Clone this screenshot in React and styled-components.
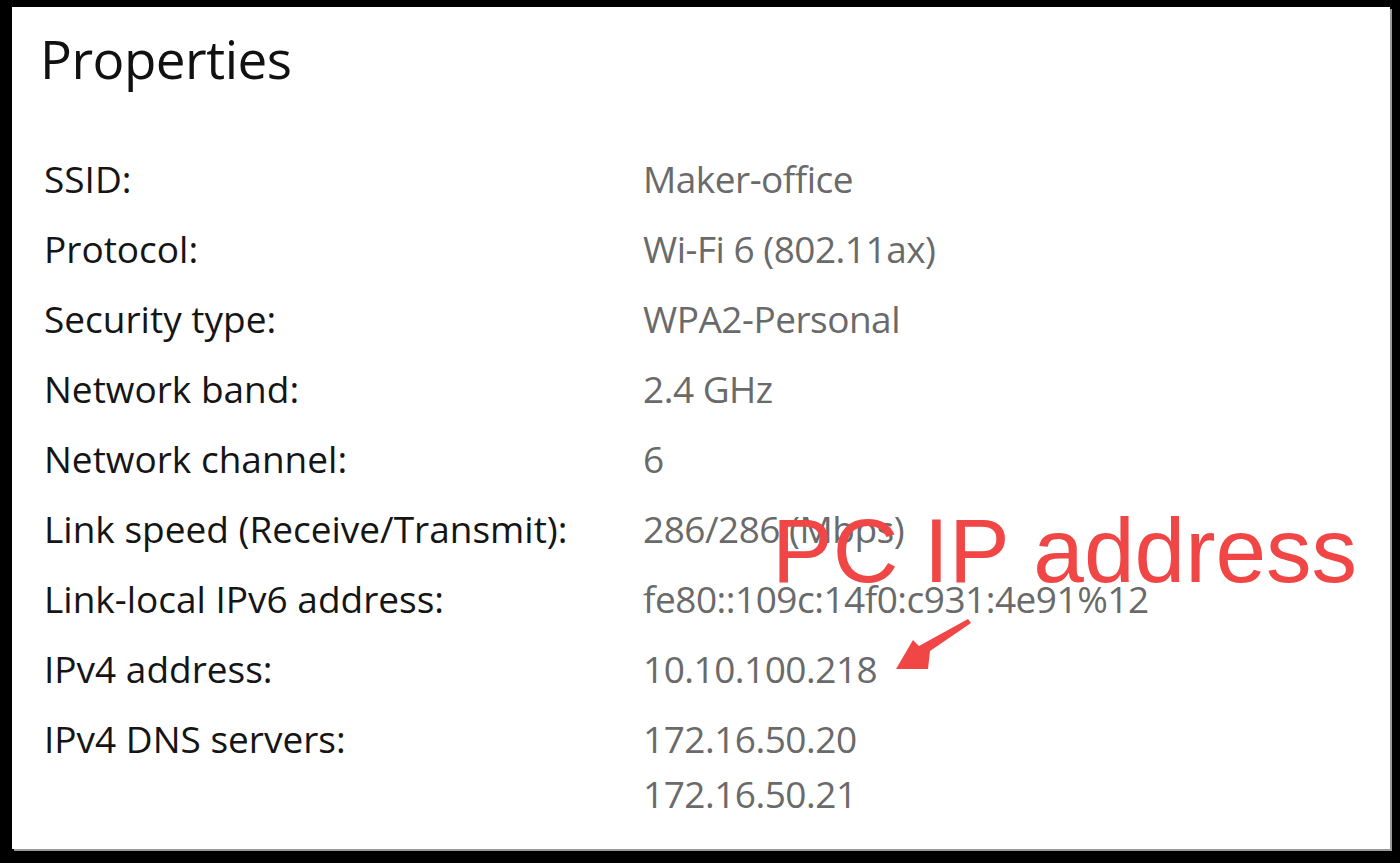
import React from "react";
import styled, { createGlobalStyle } from "styled-components";

const GlobalStyle = createGlobalStyle`
  html, body {
    margin: 0;
    padding: 0;
    background: #000;
  }
  body {
    width: 1400px;
    height: 863px;
    overflow: hidden;
  }
`;

const Page = styled.div`
  width: 1400px;
  height: 863px;
  box-sizing: border-box;
  padding: 7px 10px 14px 12px;
  display: flex;
`;

const Panel = styled.section`
  position: relative;
  flex: 1;
  background: #fff;
  box-shadow: 2px 2px 0 #9a9a9a;
  padding: 20px 0 0 28px;
  font-family: "Open Sans", "Noto Sans", sans-serif;
`;

const Title = styled.h1`
  margin: 0 0 60px 0;
  font-size: 53px;
  font-weight: 400;
  line-height: 64px;
  color: #111;
  letter-spacing: -0.5px;
`;

const List = styled.dl`
  margin: 0;
  display: grid;
  grid-template-columns: 599px 1fr;
  row-gap: 15px;
`;

const Label = styled.dt`
  margin: 0 0 0 4px;
  font-size: 37px;
  line-height: 55px;
  color: #151515;
  letter-spacing: 0;
`;

const Value = styled.dd`
  margin: 0 0 0 4px;
  font-size: 37px;
  line-height: 55px;
  color: #6a6a6a;
  letter-spacing: -0.5px;
`;

const Callout = styled.div`
  position: absolute;
  left: 760px;
  top: 494px;
  font-family: "Liberation Sans", Arial, sans-serif;
  font-size: 91px;
  line-height: 100px;
  color: #f04646;
  white-space: nowrap;
`;

const Arrow = styled.svg`
  position: absolute;
  left: 872px;
  top: 612px;
`;

const rows = [
  ["SSID:", ["Maker-office"]],
  ["Protocol:", ["Wi-Fi 6 (802.11ax)"]],
  ["Security type:", ["WPA2-Personal"]],
  ["Network band:", ["2.4 GHz"]],
  ["Network channel:", ["6"]],
  ["Link speed (Receive/Transmit):", ["286/286 (Mbps)"]],
  ["Link-local IPv6 address:", ["fe80::109c:14f0:c931:4e91%12"]],
  ["IPv4 address:", ["10.10.100.218"]],
  ["IPv4 DNS servers:", ["172.16.50.20", "172.16.50.21"]],
];

export default function App() {
  return (
    <>
      <GlobalStyle />
      <Page>
        <Panel>
          <Title>Properties</Title>
          <List>
            {rows.map(([label, values]) => (
              <React.Fragment key={label}>
                <Label>{label}</Label>
                <Value>
                  {values.map((v) => (
                    <div key={v}>{v}</div>
                  ))}
                </Value>
              </React.Fragment>
            ))}
          </List>
          <Callout>PC IP address</Callout>
          {/* pointer from the callout down to the IPv4 value */}
          <Arrow width="100" height="60" viewBox="0 0 100 60">
            <path
              d="M84 0 L87 4 L46 32 L44 50 L12 50 L29 21 L35 27 Z"
              fill="#f04646"
            />
          </Arrow>
        </Panel>
      </Page>
    </>
  );
}
